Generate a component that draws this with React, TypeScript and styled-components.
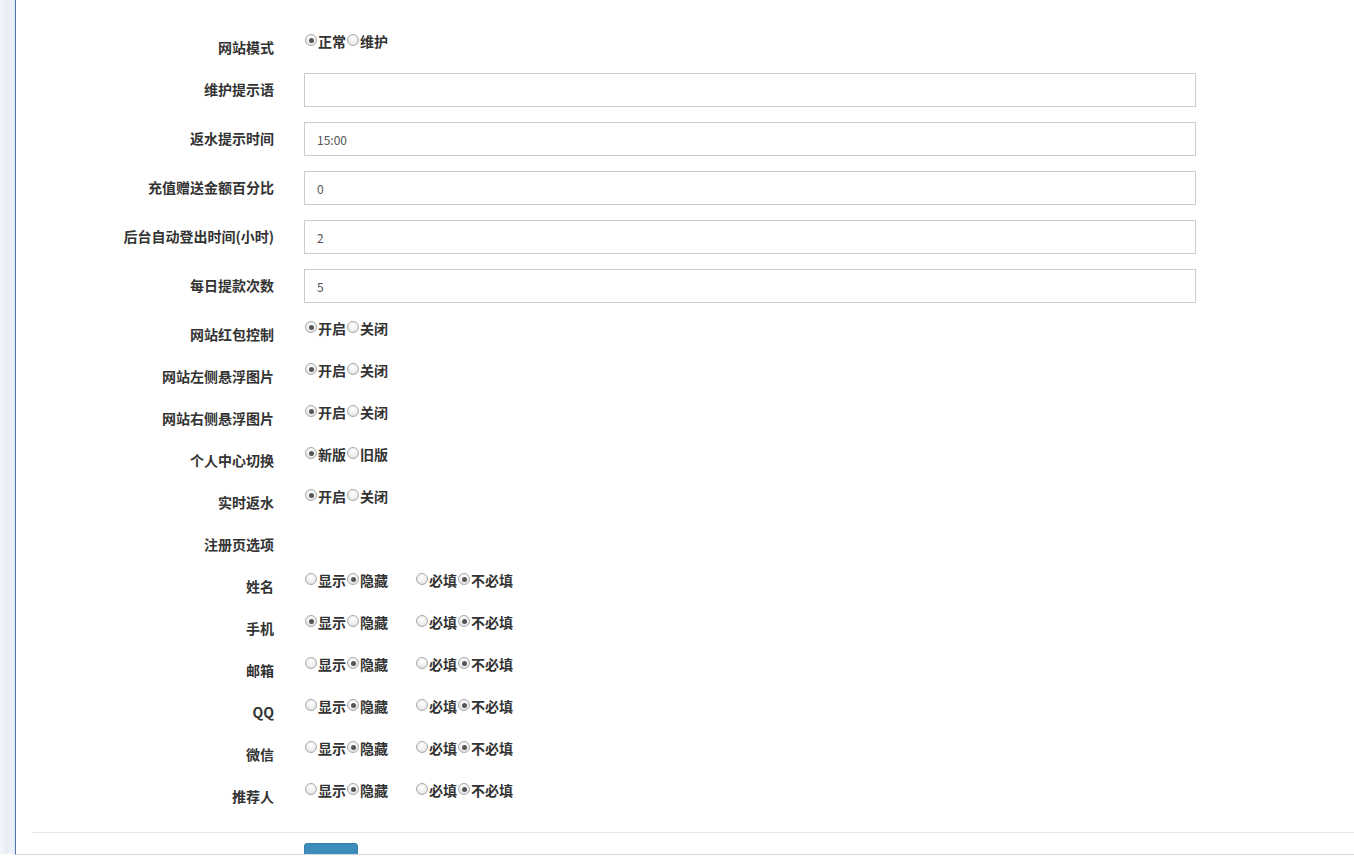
import React from "react";
import styled, { createGlobalStyle } from "styled-components";

const GlobalStyle = createGlobalStyle`
  html, body { margin: 0; padding: 0; background: #fff; overflow: hidden; }
  body { font-family: "Noto Sans CJK SC", "Noto Sans", "Liberation Sans", sans-serif; color: #333; }
  * { box-sizing: border-box; }
`;

const Page = styled.div`
  display: flex;
  height: 856px;
  background: #fff;
`;

const SideStrip = styled.div`
  width: 15px;
  height: 854px;
  flex-shrink: 0;
  background: linear-gradient(90deg, #f3f6fa 0%, #e6edf5 45%, #edf2f8 70%, #e4ebf4 100%);
`;

const Main = styled.div`
  flex: 1;
  height: 855px;
  border-left: 1px solid #4c77a0;
  border-bottom: 1px solid #d6d6d6;
  overflow: hidden;
  background: #fff;
`;

const Form = styled.form`
  padding-top: 31px;
  padding-bottom: 10px;
`;

const FormGroup = styled.div`
  display: flex;
  align-items: flex-start;
  margin-bottom: 15px;
`;

const Label = styled.label`
  width: 273px;
  flex-shrink: 0;
  padding-right: 15px;
  padding-top: 6px;
  text-align: right;
  font-size: 14px;
  font-weight: 700;
  line-height: 20px;
  color: #333;
  white-space: nowrap;
`;

const Control = styled.div`
  padding-left: 15px;
  width: 907px;
  min-height: 27px;
  display: flex;
  align-items: flex-start;
`;

const TextInput = styled.input`
  width: 892px;
  height: 34px;
  padding: 6px 12px;
  border: 1px solid #cccccc;
  border-radius: 0;
  font-family: "Noto Sans CJK SC", "Noto Sans", "Liberation Sans", sans-serif;
  font-size: 12px;
  color: #555;
  background: #fff;
  outline: none;
`;

const RadioGroup = styled.div<{ $offset?: number }>`
  display: flex;
  align-items: center;
  height: 20px;
  margin-left: ${(p) => p.$offset ?? 0}px;
`;

const RadioOption = styled.label`
  display: inline-flex;
  align-items: center;
  height: 20px;
  font-size: 14px;
  font-weight: 700;
  line-height: 20px;
  color: #333;
  cursor: pointer;
  white-space: nowrap;
`;

const RadioCircle = styled.input.attrs({ type: "radio" })`
  appearance: none;
  -webkit-appearance: none;
  width: 12px;
  height: 12px;
  margin: -2px 1px 0 1px;
  border-radius: 50%;
  border: 1px solid #a9a9a9;
  background: radial-gradient(circle at 50% 35%, #ffffff 0%, #eeeeee 55%, #d8d8d8 100%);
  position: relative;
  flex-shrink: 0;
  &:checked::after {
    content: "";
    position: absolute;
    left: 2.5px;
    top: 2.5px;
    width: 5px;
    height: 5px;
    border-radius: 50%;
    background: #555;
  }
`;

const Divider = styled.div`
  margin-left: 16px;
  border-top: 1px solid #e8e8e8;
`;

const Actions = styled.div`
  padding: 10px 0 0 288px;
`;

const SubmitButton = styled.button`
  height: 34px;
  padding: 6px 12px;
  border: 1px solid #367fa9;
  border-radius: 3px;
  background: #3c8dbc;
  color: #fff;
  font-family: "Noto Sans CJK SC", "Noto Sans", sans-serif;
  font-size: 14px;
  line-height: 20px;
`;

type Opt = { label: string; checked: boolean };

const Radios: React.FC<{ name: string; options: Opt[]; offset?: number }> = ({ name, options, offset }) => (
  <RadioGroup $offset={offset}>
    {options.map((o) => (
      <RadioOption key={o.label}>
        <RadioCircle name={name} defaultChecked={o.checked} />
        {o.label}
      </RadioOption>
    ))}
  </RadioGroup>
);

const textRows = [
  { label: "维护提示语", value: "" },
  { label: "返水提示时间", value: "15:00" },
  { label: "充值赠送金额百分比", value: "0" },
  { label: "后台自动登出时间(小时)", value: "2" },
  { label: "每日提款次数", value: "5" },
];

const toggleRows = [
  { label: "网站红包控制", a: "开启", b: "关闭" },
  { label: "网站左侧悬浮图片", a: "开启", b: "关闭" },
  { label: "网站右侧悬浮图片", a: "开启", b: "关闭" },
  { label: "个人中心切换", a: "新版", b: "旧版" },
  { label: "实时返水", a: "开启", b: "关闭" },
];

const regRows = [
  { label: "姓名", show: false },
  { label: "手机", show: true },
  { label: "邮箱", show: false },
  { label: "QQ", show: false },
  { label: "微信", show: false },
  { label: "推荐人", show: false },
];

export default function App() {
  return (
    <>
      <GlobalStyle />
      <Page>
        <SideStrip />
        <Main>
          <Form onSubmit={(e) => e.preventDefault()}>
            <FormGroup>
              <Label>网站模式</Label>
              <Control>
                <Radios
                  name="mode"
                  options={[
                    { label: "正常", checked: true },
                    { label: "维护", checked: false },
                  ]}
                />
              </Control>
            </FormGroup>
            {textRows.map((r) => (
              <FormGroup key={r.label}>
                <Label>{r.label}</Label>
                <Control>
                  <TextInput type="text" defaultValue={r.value} />
                </Control>
              </FormGroup>
            ))}
            {toggleRows.map((r, i) => (
              <FormGroup key={r.label}>
                <Label>{r.label}</Label>
                <Control>
                  <Radios
                    name={`toggle${i}`}
                    options={[
                      { label: r.a, checked: true },
                      { label: r.b, checked: false },
                    ]}
                  />
                </Control>
              </FormGroup>
            ))}
            <FormGroup>
              <Label>注册页选项</Label>
              <Control />
            </FormGroup>
            {regRows.map((r, i) => (
              <FormGroup key={r.label}>
                <Label>{r.label}</Label>
                <Control>
                  <Radios
                    name={`show${i}`}
                    options={[
                      { label: "显示", checked: r.show },
                      { label: "隐藏", checked: !r.show },
                    ]}
                  />
                  <Radios
                    name={`req${i}`}
                    offset={27}
                    options={[
                      { label: "必填", checked: false },
                      { label: "不必填", checked: true },
                    ]}
                  />
                </Control>
              </FormGroup>
            ))}
          </Form>
          <Divider />
          <Actions>
            <SubmitButton type="button">提交</SubmitButton>
          </Actions>
        </Main>
      </Page>
    </>
  );
}
